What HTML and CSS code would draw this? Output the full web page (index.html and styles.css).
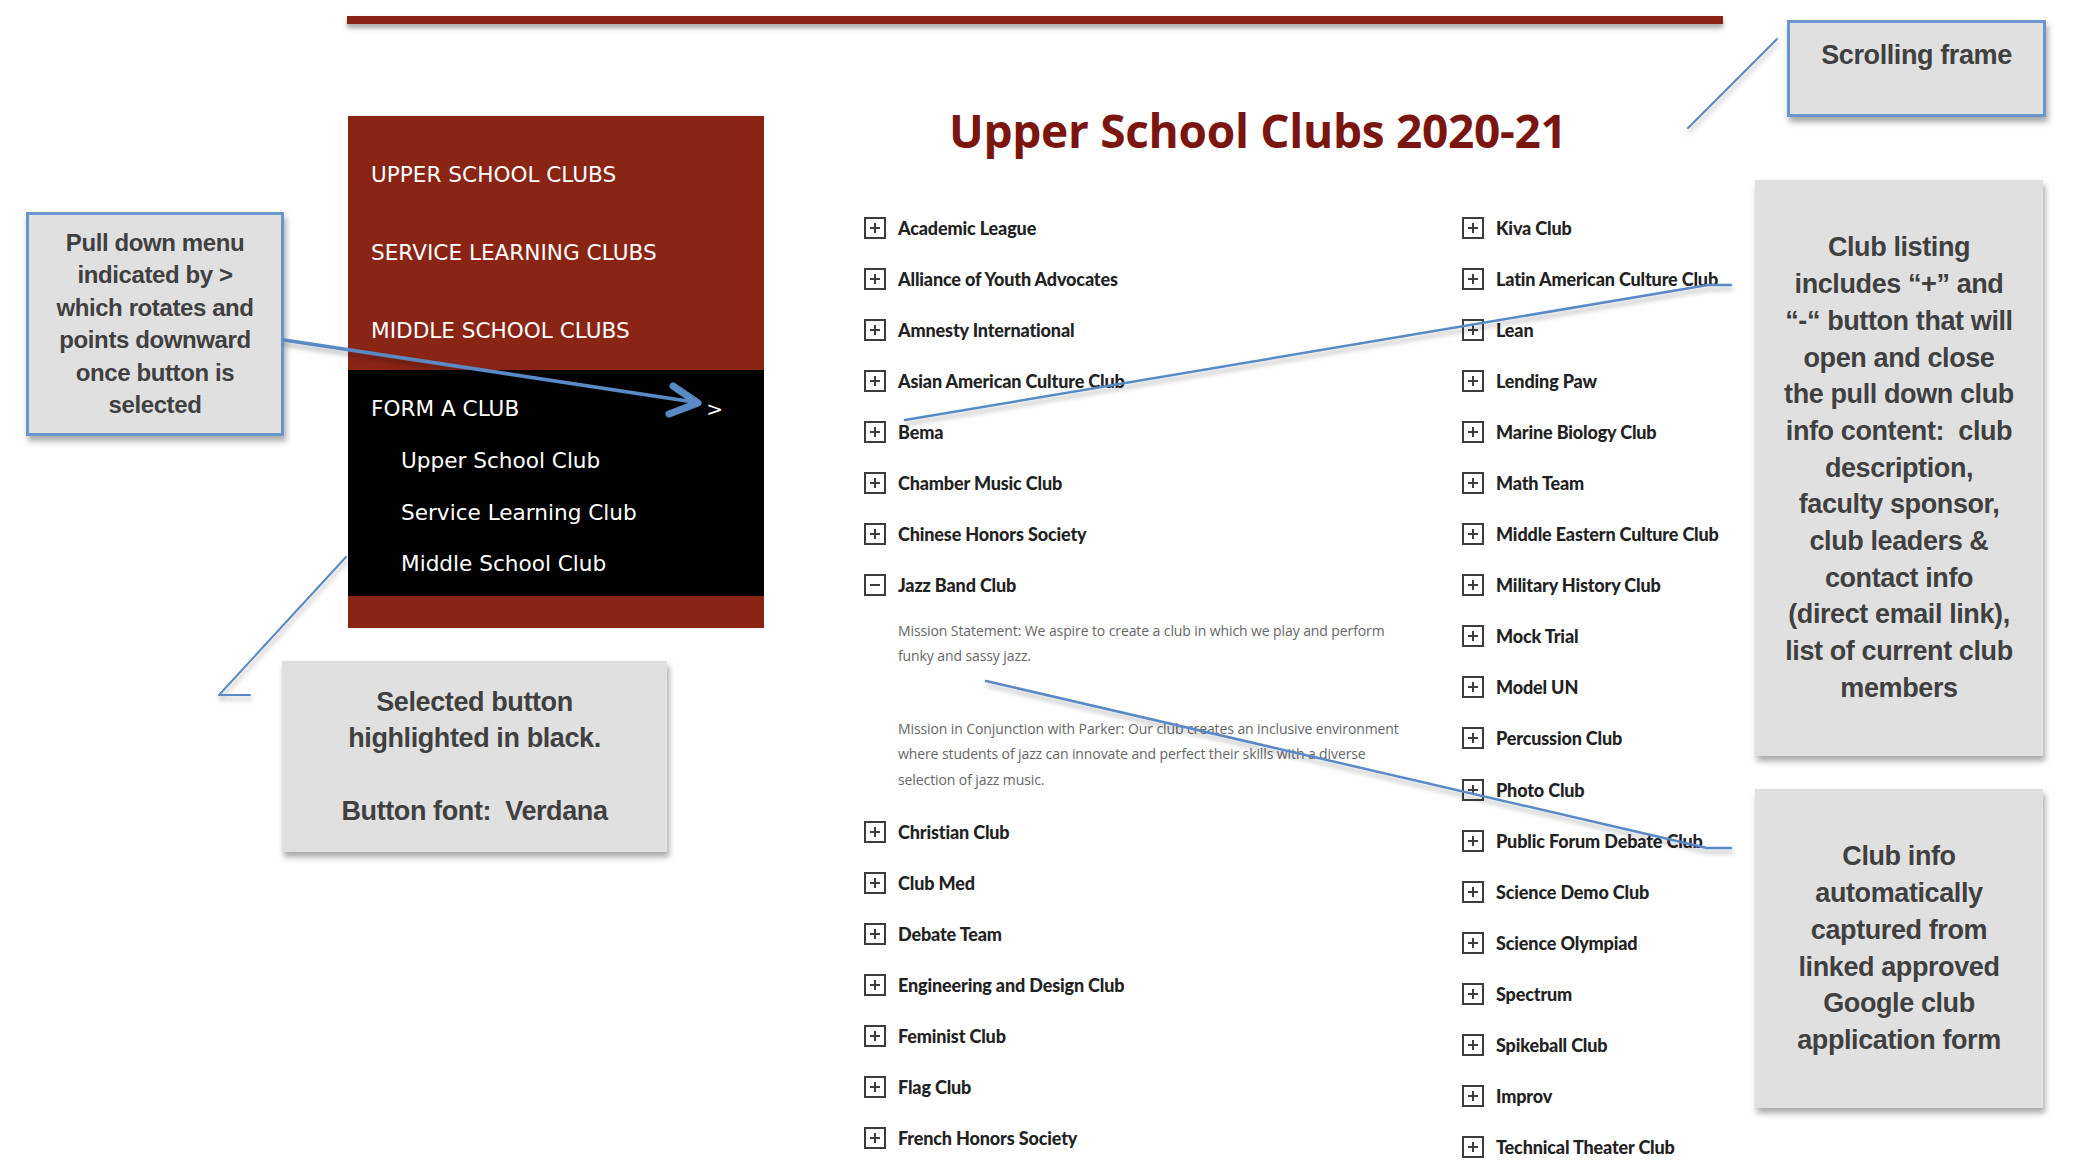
FILE: index.html
```html
<!DOCTYPE html>
<html lang="en">
<head>
<meta charset="utf-8">
<title>Upper School Clubs 2020-21</title>
<link rel="stylesheet" href="styles.css">
</head>
<body>
<div class="canvas">
  <div class="site">
    <div class="topbar"></div>
    <div class="main">
      <nav class="menu">
        <a class="menu-item">UPPER SCHOOL CLUBS</a>
        <a class="menu-item">SERVICE LEARNING CLUBS</a>
        <a class="menu-item">MIDDLE SCHOOL CLUBS</a>
        <div class="menu-open">
          <div class="menu-item selected"><span>FORM A CLUB</span><span class="caret">&gt;</span></div>
          <a class="sub-item">Upper School Club</a>
          <a class="sub-item">Service Learning Club</a>
          <a class="sub-item">Middle School Club</a>
        </div>
      </nav>
      <section class="content">
        <h1 class="title">Upper School Clubs 2020-21</h1>
        <div class="clubs">
          <ul class="col col-left">
            <li class="club"><span class="toggle"></span>Academic League</li>
            <li class="club"><span class="toggle"></span>Alliance of Youth Advocates</li>
            <li class="club"><span class="toggle"></span>Amnesty International</li>
            <li class="club"><span class="toggle"></span>Asian American Culture Club</li>
            <li class="club"><span class="toggle"></span>Bema</li>
            <li class="club"><span class="toggle"></span>Chamber Music Club</li>
            <li class="club"><span class="toggle"></span>Chinese Honors Society</li>
            <li class="club"><span class="toggle minus"></span>Jazz Band Club</li>
            <li class="club-info">
              <p>Mission Statement: We aspire to create a club in which we play and perform<br>funky and sassy jazz.</p>
              <p>Mission in Conjunction with Parker: Our club creates an inclusive environment<br>where students of jazz can innovate and perfect their skills with a diverse<br>selection of jazz music.</p>
            </li>
            <li class="club"><span class="toggle"></span>Christian Club</li>
            <li class="club"><span class="toggle"></span>Club Med</li>
            <li class="club"><span class="toggle"></span>Debate Team</li>
            <li class="club"><span class="toggle"></span>Engineering and Design Club</li>
            <li class="club"><span class="toggle"></span>Feminist Club</li>
            <li class="club"><span class="toggle"></span>Flag Club</li>
            <li class="club"><span class="toggle"></span>French Honors Society</li>
          </ul>
          <ul class="col col-right">
            <li class="club"><span class="toggle"></span>Kiva Club</li>
            <li class="club"><span class="toggle"></span>Latin American Culture Club</li>
            <li class="club"><span class="toggle"></span>Lean</li>
            <li class="club"><span class="toggle"></span>Lending Paw</li>
            <li class="club"><span class="toggle"></span>Marine Biology Club</li>
            <li class="club"><span class="toggle"></span>Math Team</li>
            <li class="club"><span class="toggle"></span>Middle Eastern Culture Club</li>
            <li class="club"><span class="toggle"></span>Military History Club</li>
            <li class="club"><span class="toggle"></span>Mock Trial</li>
            <li class="club"><span class="toggle"></span>Model UN</li>
            <li class="club"><span class="toggle"></span>Percussion Club</li>
            <li class="club"><span class="toggle"></span>Photo Club</li>
            <li class="club"><span class="toggle"></span>Public Forum Debate Club</li>
            <li class="club"><span class="toggle"></span>Science Demo Club</li>
            <li class="club"><span class="toggle"></span>Science Olympiad</li>
            <li class="club"><span class="toggle"></span>Spectrum</li>
            <li class="club"><span class="toggle"></span>Spikeball Club</li>
            <li class="club"><span class="toggle"></span>Improv</li>
            <li class="club"><span class="toggle"></span>Technical Theater Club</li>
          </ul>
        </div>
      </section>
    </div>
  </div>

  <div class="note note-menu">Pull down menu<br>indicated by &gt;<br>which rotates and<br>points downward<br>once button is<br>selected</div>
  <div class="note note-selected">Selected button<br>highlighted in black.<br><br>Button font:&nbsp; Verdana</div>
  <div class="note note-frame">Scrolling frame</div>
  <div class="note note-listing">Club listing<br>includes “+” and<br>“-“ button that will<br>open and close<br>the pull down club<br>info content:&nbsp; club<br>description,<br>faculty sponsor,<br>club leaders &amp;<br>contact info<br>(direct email link),<br>list of current club<br>members</div>
  <div class="note note-info">Club info<br>automatically<br>captured from<br>linked approved<br>Google club<br>application form</div>

  <svg class="connectors" width="2084" height="1170" viewBox="0 0 2084 1170">
    <defs>
      <filter id="shade" x="-10%" y="-10%" width="130%" height="140%">
        <feDropShadow dx="1" dy="4" stdDeviation="2.5" flood-color="#000" flood-opacity="0.3"/>
      </filter>
    </defs>
    <g fill="none" stroke="#5a8ac6" stroke-linecap="round" stroke-linejoin="round" filter="url(#shade)">
      <path d="M284 340 L694 402" stroke-width="3.5"/>
      <path d="M673 386 L698 403 L669 414" stroke-width="7"/>
      <path d="M346 557 L219 695 L250 695" stroke-width="2"/>
      <path d="M1688 128 L1777 39" stroke-width="2"/>
      <path d="M905 420 L1708 285 L1731 285" stroke-width="2.5"/>
      <path d="M986 681 L1707 848 L1731 848" stroke-width="2.5"/>
    </g>
  </svg>
</div>
</body>
</html>
```
FILE: styles.css
```css
* { box-sizing: border-box; }

html, body {
  margin: 0;
  padding: 0;
  background: #ffffff;
}

body {
  width: 2084px;
  height: 1170px;
  overflow: hidden;
}

.canvas {
  position: relative;
  width: 2084px;
  height: 1170px;
}

.site {
  margin-left: 347px;
  width: 1376px;
  padding-top: 16px;
}

.topbar {
  height: 8px;
  background: #8a2213;
  box-shadow: 0 4px 5px rgba(0, 0, 0, 0.35);
}

.main {
  display: flex;
  align-items: flex-start;
  margin-top: 76px;
}

/* ---------- menu ---------- */
.menu {
  width: 416px;
  flex: none;
  margin-top: 16px;
  margin-left: 1px;
  background: #8a2415;
  padding: 20px 0 32px;
  font-family: "DejaVu Sans", Verdana, sans-serif;
  font-size: 21.6px;
  color: #ffffff;
}

.menu-item {
  display: block;
  padding: 26px 23px;
  line-height: 26px;
  color: #ffffff;
  text-decoration: none;
}

.menu-open {
  background: #000000;
  padding-bottom: 6px;
}

.selected {
  display: flex;
  justify-content: space-between;
  padding: 26px 41px 13.5px 23px;
}

.caret {
  font-size: 20px;
}

.sub-item {
  display: block;
  padding: 12.75px 23px 12.75px 53px;
  line-height: 26px;
  color: #ffffff;
}

/* ---------- content ---------- */
.content {
  flex: 1;
  padding-left: 100px;
}

.title {
  margin: 0 0 0 85px;
  font-family: "Open Sans", sans-serif;
  font-weight: 700;
  font-size: 46px;
  line-height: 60px;
  color: #7a1510;
  letter-spacing: -0.3px;
}

.clubs {
  display: flex;
  margin-top: 42px;
}

.col {
  list-style: none;
  margin: 0;
  padding: 0;
}

.col-left {
  width: 598px;
  flex: none;
}

.col-right {
  flex: 1;
}

.club {
  display: flex;
  align-items: center;
  gap: 12px;
  height: 51.1px;
  font-family: Lato, "Open Sans", sans-serif;
  font-weight: 900;
  font-size: 18px;
  color: #222222;
  letter-spacing: -0.15px;
}

.toggle {
  width: 22px;
  height: 22px;
  flex: none;
  border: 2px solid #3c3c3c;
  background:
    linear-gradient(#3c3c3c, #3c3c3c) center / 10px 2px no-repeat,
    linear-gradient(#3c3c3c, #3c3c3c) center / 2px 10px no-repeat;
}

.toggle.minus {
  background: linear-gradient(#3c3c3c, #3c3c3c) center / 10px 2px no-repeat;
}

.club-info {
  padding: 7px 0 14px 34px;
  font-family: "Open Sans", sans-serif;
  font-size: 14px;
  line-height: 25.5px;
  color: #666666;
  letter-spacing: -0.1px;
}

.club-info p {
  margin: 0;
}

.club-info p + p {
  margin-top: 47px;
}

/* ---------- annotation callouts ---------- */
.note {
  position: absolute;
  display: flex;
  align-items: center;
  justify-content: center;
  text-align: center;
  background: #e0e0e0;
  color: #404040;
  font-family: "Liberation Sans", Arial, sans-serif;
  font-weight: 700;
  font-size: 27px;
  line-height: 36.7px;
  letter-spacing: -0.4px;
  box-shadow: 2px 5px 6px rgba(0, 0, 0, 0.35);
}

.note-menu {
  left: 26px;
  top: 212px;
  width: 258px;
  height: 224px;
  border: 3px solid #6a96cc;
  font-size: 24px;
  line-height: 32.5px;
}

.note-selected {
  left: 282px;
  top: 661px;
  width: 385px;
  height: 191px;
  line-height: 36.5px;
}

.note-frame {
  left: 1787px;
  top: 20px;
  width: 259px;
  height: 97px;
  border: 3px solid #6a96cc;
  align-items: flex-start;
  padding-top: 14px;
}

.note-listing {
  left: 1755px;
  top: 180px;
  width: 288px;
  height: 576px;
}

.note-info {
  left: 1755px;
  top: 789px;
  width: 288px;
  height: 319px;
}

.connectors {
  position: absolute;
  left: 0;
  top: 0;
  pointer-events: none;
}
```
